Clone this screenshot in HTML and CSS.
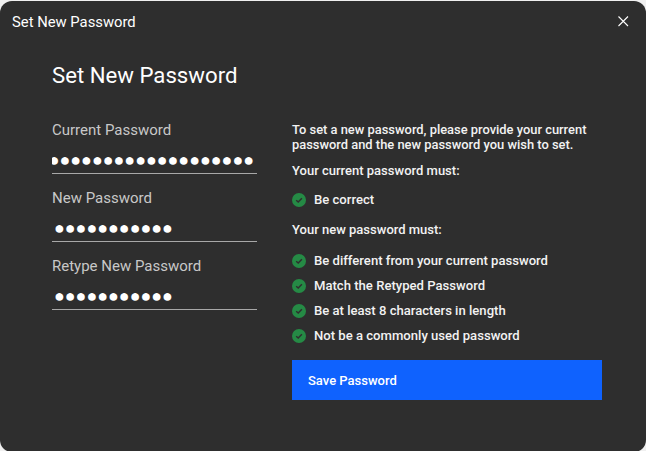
FILE: index.html

```html
<!DOCTYPE html>
<html>
<head>
	<meta charset="utf-8">
	<title>Set New Password</title>
	<link rel="stylesheet" href="styles.css">
</head>
<body>
	<div class="dialog">
		<div class="titlebar">
			<span class="titlebar-text">Set New Password</span>
			<svg class="close" width="12" height="12" viewBox="0 0 12 12"><path d="M1.5 0.5L11 10M11 0.5L1.5 10" stroke="#fff" stroke-width="1.1" fill="none"/></svg>
		</div>
		<div class="content">
			<h1>Set New Password</h1>
			<div class="columns">
				<div class="fields">
					<div class="field">
						<div class="label">Current Password</div>
						<div class="dots"><span>●●●●●●●●●●●●●●●●●●●●</span></div>
					</div>
					<div class="field">
						<div class="label">New Password</div>
						<div class="dots start"><span>●●●●●●●●●●●</span></div>
					</div>
					<div class="field">
						<div class="label">Retype New Password</div>
						<div class="dots start"><span>●●●●●●●●●●●</span></div>
					</div>
				</div>
				<div class="info">
					<p class="intro">To set a new password, please provide your current password and the new password you wish to set.</p>
					<p class="heading">Your current password must:</p>
					<ul class="rules one">
						<li><svg class="check" width="14" height="14" viewBox="0 0 14 14"><circle cx="7" cy="7" r="7" fill="#258a45"/><path d="M4.2 7.2L6.2 9.1L9.9 5.2" stroke="#2e2e2e" stroke-width="1.4" fill="none"/></svg>Be correct</li>
					</ul>
					<p class="heading">Your new password must:</p>
					<ul class="rules">
						<li><svg class="check" width="14" height="14" viewBox="0 0 14 14"><circle cx="7" cy="7" r="7" fill="#258a45"/><path d="M4.2 7.2L6.2 9.1L9.9 5.2" stroke="#2e2e2e" stroke-width="1.4" fill="none"/></svg>Be different from your current password</li>
						<li><svg class="check" width="14" height="14" viewBox="0 0 14 14"><circle cx="7" cy="7" r="7" fill="#258a45"/><path d="M4.2 7.2L6.2 9.1L9.9 5.2" stroke="#2e2e2e" stroke-width="1.4" fill="none"/></svg>Match the Retyped Password</li>
						<li><svg class="check" width="14" height="14" viewBox="0 0 14 14"><circle cx="7" cy="7" r="7" fill="#258a45"/><path d="M4.2 7.2L6.2 9.1L9.9 5.2" stroke="#2e2e2e" stroke-width="1.4" fill="none"/></svg>Be at least 8 characters in length</li>
						<li><svg class="check" width="14" height="14" viewBox="0 0 14 14"><circle cx="7" cy="7" r="7" fill="#258a45"/><path d="M4.2 7.2L6.2 9.1L9.9 5.2" stroke="#2e2e2e" stroke-width="1.4" fill="none"/></svg>Not be a commonly used password</li>
					</ul>
					<button class="save">Save Password</button>
				</div>
			</div>
		</div>
	</div>
</body>
</html>
```

FILE: styles.css

```css
html, body{
	margin: 0px;
	height: 100%;
	background-color: #f0f0f0;
	overflow: hidden;
}
body{
	font-family: "Roboto", "Liberation Sans", sans-serif;
	color: #fff;
}
.dialog{
	box-sizing: border-box;
	height: 451px;
	margin-top: 1px;
	background-color: #2e2e2e;
	border-radius: 12px;
}
.titlebar{
	display: flex;
	justify-content: space-between;
	align-items: center;
	height: 41px;
	padding: 0px 17px 0px 12px;
	font-size: 14.8px;
}
.content{
	padding: 0px 44px 0px 52px;
}
h1{
	margin: 19px 0px 0px;
	font-size: 22.2px;
	line-height: 28px;
	font-weight: 400;
}
.columns{
	display: flex;
	gap: 35px;
	margin-top: 31px;
}
.fields{
	width: 205px;
	flex: none;
}
.field{
	height: 68px;
}
.label{
	font-size: 15px;
	line-height: 20px;
	color: #c8c8c8;
}
.dots{
	display: flex;
	justify-content: flex-end;
	overflow: hidden;
	box-sizing: border-box;
	height: 30px;
	margin-top: 4px;
	padding-right: 3px;
	border-bottom: 1px solid #a8a8a8;
	line-height: 31px;
	font-size: 17.9px;
	white-space: nowrap;
}
.dots.start{
	justify-content: flex-start;
	padding-left: 2px;
}
.info{
	width: 310px;
	font-size: 12.9px;
	font-weight: 500;
	color: #f2f2f2;
}
.info p{
	margin: 0px;
}
.intro{
	padding-top: 2px;
	line-height: 15px;
}
.heading{
	font-size: 13px;
	line-height: 16px;
}
.info .intro + .heading{
	margin-top: 11px;
}
.rules{
	list-style: none;
	margin: 10px 0px 12px;
	padding: 0px;
	font-size: 13.1px;
}
.rules.one{
	margin: 8px 0px 10px;
}
.rules li{
	display: flex;
	align-items: center;
	height: 25px;
}
.check{
	margin-right: 8px;
	flex: none;
}
.save{
	display: block;
	width: 310px;
	height: 40px;
	padding: 0px 0px 0px 16px;
	border: none;
	background-color: #0f62fe;
	color: #fff;
	font-family: inherit;
	font-size: 13px;
	font-weight: 500;
	text-align: left;
}
```
